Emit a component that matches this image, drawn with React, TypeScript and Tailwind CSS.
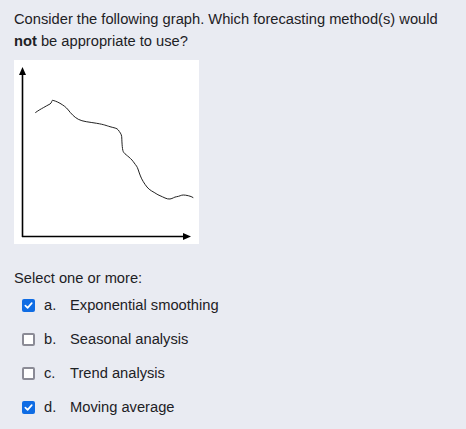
import React from "react";

interface Option {
  letter: string;
  label: string;
  checked: boolean;
}

const options: Option[] = [
  { letter: "a.", label: "Exponential smoothing", checked: true },
  { letter: "b.", label: "Seasonal analysis", checked: false },
  { letter: "c.", label: "Trend analysis", checked: false },
  { letter: "d.", label: "Moving average", checked: true },
];

// hand-traced curve from the original graph
const curve =
  "M21.3 52.7 C25 50 27 49 29.3 47.7 S34 45 36 44 S37.5 40 38.7 40.3 S43 41.5 46 43.3 S52 47 54.3 50 S60 57 64.3 59.3 S75 62 82.7 63.3 S92 65.5 96 66.7 S103 68 104.3 70 S107.5 74 107.7 76.7 S108 89 109.3 91.7 S116 97 119.3 101.7 S123 106 124.3 110 S127 118 129.3 121.7 S134 129 137.7 131 S143 134.5 146 135.7 S153 139.5 156 139 S160 137 162.7 136.7 S167 135 169.3 135 S177 136 179.3 137.7";

export default function App() {
  return (
    <div
      className="min-h-[429px] w-full bg-[#e9ebf2] pl-[14px] pr-4 pt-[8px] text-[14.7px] leading-[22px] text-[#1d2125]"
      style={{ fontFamily: '"Liberation Sans", Arial, sans-serif' }}
    >
      <p className="max-w-[430px]">
        Consider the following graph. Which forecasting method(s) would{" "}
        <strong className="font-bold">not</strong> be appropriate to use?
      </p>

      <div className="mt-[8px] h-[184px] w-[185px] bg-white">
        <Graph />
      </div>

      <p className="mt-[24px] leading-[20px]">Select one or more:</p>

      <ul>
        {options.map(opt => (
          <li key={opt.letter} className="flex h-[34px] items-center pl-[8px]">
            <CheckBox checked={opt.checked} />
            <span className="ml-[9px] w-[26px]">{opt.letter}</span>
            <span>{opt.label}</span>
          </li>
        ))}
      </ul>
    </div>
  );
}

function Graph() {
  return (
    <svg width="185" height="184" viewBox="0 0 185 184">
      {/* axes */}
      <line x1="8.5" y1="14" x2="8.5" y2="177" stroke="#000" strokeWidth="1.6" />
      <line x1="8" y1="176.5" x2="170" y2="176.5" stroke="#000" strokeWidth="1.6" />
      <polygon points="8.5,7 5,15 12,15" fill="#000" />
      <polygon points="177,176.5 169,173 169,180" fill="#000" />
      <path d={curve} fill="none" stroke="#222" strokeWidth="1" strokeLinejoin="round" />
    </svg>
  );
}

function CheckBox({ checked }: { checked: boolean }) {
  if (checked) {
    return (
      <span className="flex h-[13px] w-[13px] items-center justify-center rounded-[2px] bg-[#0f6ce4]">
        <svg width="9" height="9" viewBox="0 0 10 10">
          <path d="M1.5 5.2 L4 7.6 L8.6 2.4" fill="none" stroke="#fff" strokeWidth="1.9" strokeLinecap="round" strokeLinejoin="round" />
        </svg>
      </span>
    );
  }
  return <span className="h-[13px] w-[13px] rounded-[2px] border-2 border-[#8b8b96] bg-white" />;
}
